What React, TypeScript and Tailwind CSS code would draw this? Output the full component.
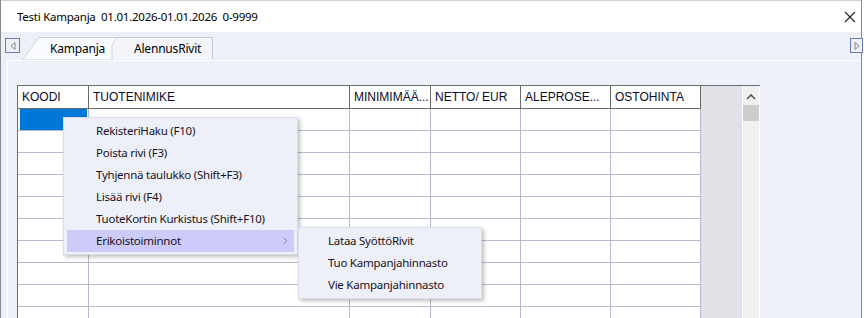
import React from "react";

const headerCols = [
  { label: "KOODI", w: "w-[71px]" },
  { label: "TUOTENIMIKE", w: "w-[261px]" },
  { label: "MINIMIMÄÄ...", w: "w-[81px]" },
  { label: "NETTO/ EUR", w: "w-[90px]" },
  { label: "ALEPROSE...", w: "w-[90px]" },
  { label: "OSTOHINTA", w: "w-[90px]" },
];

const menuItems = [
  "RekisteriHaku (F10)",
  "Poista rivi (F3)",
  "Tyhjennä taulukko (Shift+F3)",
  "Lisää rivi (F4)",
  "TuoteKortin Kurkistus (Shift+F10)",
];

const subItems = ["Lataa SyöttöRivit", "Tuo Kampanjahinnasto", "Vie Kampanjahinnasto"];

const ui = { fontFamily: '"Noto Sans", "Open Sans", sans-serif' };
const grid = { fontFamily: '"Liberation Sans", Arial, sans-serif' };

export default function App() {
  return (
    <div
      className="relative w-[864px] h-[318px] overflow-hidden bg-white text-[11.5px] tracking-[-0.25px] text-black"
      style={ui}
    >
      <div className="flex flex-col h-full w-[862px] border-l border-r border-[#8a8a8a]">
        {/* Title bar */}
        <div className="h-[32px] flex items-center justify-between pl-[16px] pr-[4px] bg-white border-t border-[#d0d0d0]">
          <span className="whitespace-pre">Testi Kampanja  01.01.2026-01.01.2026  0-9999</span>
          <svg width="12" height="12" viewBox="0 0 12 12" className="mr-[1px]">
            <path d="M1 1 L11 11 M11 1 L1 11" stroke="#222" strokeWidth="1.1" />
          </svg>
        </div>

        {/* Tab strip */}
        <div className="h-[28px] flex items-start bg-[#eef0f8] relative">
          <div className="mt-[6px] ml-[4px] w-[15px] h-[15px] border border-[#6c7ab8] bg-[#eef0f8] flex items-center justify-center">
            <svg width="6" height="8" viewBox="0 0 6 8">
              <path d="M5 0.5 L1 4 L5 7.5 Z" fill="none" stroke="#8a8a8a" />
            </svg>
          </div>
          <div className="relative mt-[5px] ml-[2px] w-[96px] h-[23px] flex items-center pl-[28px] z-10 text-[12px] tracking-[-0.2px]">
            <svg className="absolute inset-0" width="96" height="23" viewBox="0 0 96 23">
              <path d="M0.5 23 L17 0.5 L95 0.5 L90 8 L90 23 Z" fill="#fafbfe" stroke="#cfd2dc" />
            </svg>
            <span className="relative">Kampanja</span>
          </div>
          <div className="mt-[5px] -ml-[6px] w-[101px] h-[22px] flex items-center pl-[22px] bg-[#f4f5fa] border-t border-r border-[#c6c8d0] text-[12px] tracking-[-0.2px]">
            AlennusRivit
          </div>
          <div className="absolute right-[-2px] top-[6px] w-[13px] h-[15px] border border-[#6c7ab8] bg-[#eef0f8] flex items-center justify-center">
            <svg width="6" height="8" viewBox="0 0 6 8">
              <path d="M1 0.5 L5 4 L1 7.5 Z" fill="none" stroke="#8a8a8a" />
            </svg>
          </div>
        </div>

        {/* Content panel */}
        <div className="flex-1 flex bg-[#eef0f8] min-h-0">
          <div className="flex-1 ml-[6px] border-t border-l border-white bg-[#eef1f9] pl-[9px] pt-[24px] min-h-0 overflow-hidden">
            <div className="flex w-[743px] border-t border-l border-[#6b6b6b] text-[12px] tracking-normal" style={grid}>
              <div className="flex flex-col">
                <div className="flex bg-white">
                  {headerCols.map((c) => (
                    <div
                      key={c.label}
                      className={`${c.w} h-[23px] border-b border-r border-[#6b6b6b] flex items-center pl-[4px] whitespace-nowrap overflow-hidden text-[#0b0b2a]`}
                    >
                      {c.label}
                    </div>
                  ))}
                </div>
                {Array.from({ length: 10 }).map((_, r) => (
                  <div key={r} className="flex bg-white">
                    {headerCols.map((c, i) => (
                      <div
                        key={c.label}
                        className={`${c.w} h-[22px] border-b border-r border-[#b9b9d0]`}
                      >
                        {r === 0 && i === 0 && (
                          <div className="ml-[2px] w-[67px] h-[21px] bg-[#0078d7]" />
                        )}
                      </div>
                    ))}
                  </div>
                ))}
              </div>
              <div className="w-[41px] bg-[#e1e2e8]" />
              <div className="w-[18px] bg-[#f0f0f0] border-l border-r border-white flex flex-col items-center">
                <svg width="10" height="6" viewBox="0 0 10 6" className="mt-[8px]">
                  <path d="M1 5 L5 1 L9 5" fill="none" stroke="#555" strokeWidth="1.6" />
                </svg>
                <div className="mt-[5px] w-[16px] h-[16px] bg-[#cdcdcd]" />
              </div>
            </div>
          </div>
        </div>
      </div>

      {/* Context menu */}
      <div className="absolute left-[63px] top-[117px] w-[235px] py-[2px] px-[3px] bg-[#eef0f9] border border-[#dcdde6] shadow-[2px_2px_4px_rgba(0,0,0,0.25)]">
        {menuItems.map((m) => (
          <div key={m} className="h-[22px] flex items-center pl-[29px] text-[#1a1020]">
            {m}
          </div>
        ))}
        <div className="h-[22px] flex items-center justify-between pl-[29px] pr-[6px] bg-[#cccbfa] text-[#1a1020]">
          <span>Erikoistoiminnot</span>
          <svg width="5" height="8" viewBox="0 0 5 8">
            <path d="M0.5 0.5 L4 4 L0.5 7.5" fill="none" stroke="#8a8a9a" />
          </svg>
        </div>
      </div>

      {/* Submenu */}
      <div className="absolute left-[298px] top-[227px] w-[184px] py-[2px] px-[3px] bg-[#eef0f9] border border-[#dcdde6] shadow-[2px_2px_4px_rgba(0,0,0,0.25)]">
        {subItems.map((m) => (
          <div key={m} className="h-[22px] flex items-center pl-[26px] text-[#1a1020]">
            {m}
          </div>
        ))}
      </div>
    </div>
  );
}
